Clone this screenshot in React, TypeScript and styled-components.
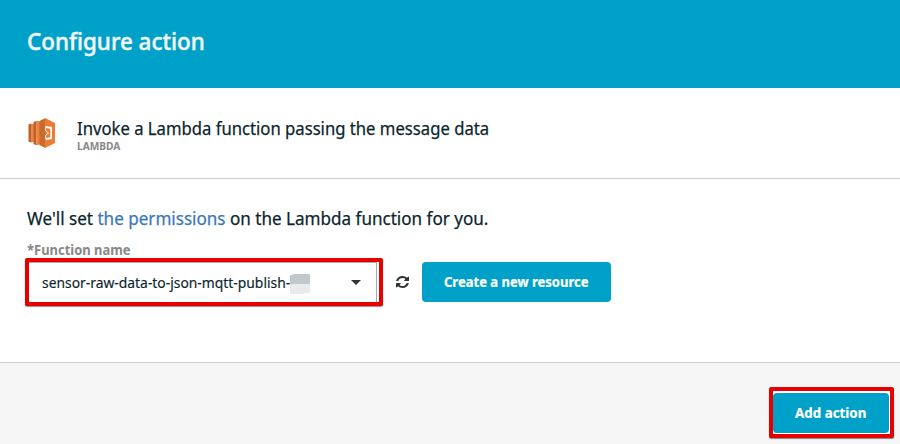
import React from 'react';
import styled, { createGlobalStyle } from 'styled-components';

const GlobalStyle = createGlobalStyle`
  * { box-sizing: border-box; }
  body {
    margin: 0;
    background: #fff;
    color: #0b252d;
    font-family: "Noto Sans", "Open Sans", sans-serif;
  }
`;

const Page = styled.div`
  display: flex;
  flex-direction: column;
  width: 900px;
  height: 444px;
  overflow: hidden;
`;

const Header = styled.header`
  flex: 0 0 88px;
  padding: 24px 27px 0;
  background: #00a1c9;
`;

/* Text set slightly narrower than the font's natural width. */
const Text = styled.span<{
  $size: number;
  $line: number;
  $scale?: number;
  $weight?: number;
  $color?: string;
  $stroke?: number;
}>`
  display: block;
  width: max-content;
  margin: 0;
  font-size: ${p => p.$size}px;
  line-height: ${p => p.$line}px;
  font-weight: ${p => p.$weight ?? 400};
  color: ${p => p.$color ?? 'inherit'};
  white-space: nowrap;
  -webkit-text-stroke: ${p => p.$stroke ?? 0}px currentColor;
  transform: scaleX(${p => p.$scale ?? 1});
  transform-origin: 0 50%;
`;

const Service = styled.section`
  display: flex;
  flex: 0 0 91px;
  gap: 21px;
  padding: 29px 28px 0;
  border-bottom: 1px solid #ccc;
`;

const LambdaLogo = styled.svg`
  display: block;
  width: 28px;
  height: 32px;
`;

const ServiceName = styled.div`
  display: flex;
  flex-direction: column;
`;

const Settings = styled.section`
  flex: 0 0 184px;
  padding: 26px 25px 0;
  border-bottom: 1px solid #ccc;
`;

const Copy = styled.div`
  height: 53px;
  padding-left: 2px;
`;

const Link = styled.a`
  color: #3b78b8;
`;

const Controls = styled.div`
  display: flex;
  align-items: flex-start;
`;

const Highlight = styled.div<{ $width: number; $height: number }>`
  width: ${p => p.$width}px;
  height: ${p => p.$height}px;
  border: 4px solid #e60000;
  border-radius: 2px;
  box-shadow: 0 1px 1px rgba(0, 0, 0, 0.45);
  background: #fff;
`;

const Select = styled.div`
  display: flex;
  align-items: center;
  width: 348px;
  height: 40px;
  padding-left: 13px;
  border: solid #aaa;
  border-width: 1px 1px 0 0;
`;

const Value = styled.div`
  width: 248px;
`;

const Redacted = styled.svg`
  width: 20px;
  height: 20px;
  margin-top: 2px;
`;

const Caret = styled.svg`
  width: 10px;
  height: 5px;
  margin-left: 41px;
`;

const Refresh = styled.svg`
  width: 13px;
  height: 12px;
  margin: 18px 13px 0 13px;
`;

const Button = styled.button<{ $width: number }>`
  display: flex;
  align-items: center;
  width: ${p => p.$width}px;
  height: 40px;
  padding: 0 0 0 22px;
  border: 0;
  border-radius: 4px;
  background: #00a1c9;
  color: #fff;
  font-family: inherit;
`;

const CreateSlot = styled.div`
  padding-top: 4px;
`;

const Footer = styled.footer`
  display: flex;
  flex: 1;
  justify-content: flex-end;
  align-items: flex-start;
  padding: 24px 6px 0 0;
  background: #f6f6f6;
`;

const ButtonInset = styled.div`
  padding-top: 2px;
`;

export default function App() {
  return (
    <Page>
      <GlobalStyle />
      <Header>
        <Text as="h1" $size={24} $line={34} $scale={0.933} $weight={500} $stroke={0.45} $color="#f2f6f8">Configure action</Text>
      </Header>
      <Service>
        <LambdaLogo viewBox="0 0 28 32">
          <path d="M.5 7.500L3 6.500v19L.5 24.500z" fill="#b9622d" />
          <path d="M3 6.500l3 .8v17.400l-3 .8z" fill="#f58536" />
          <path d="M5.500 5l3-1.200v24.400l-3-1.200z" fill="#b9622d" />
          <path d="M8.500 3.800l4.500 1v22.400l-4.500 1z" fill="#ee8136" />
          <path d="M11.500 4l6-3v30l-6-3z" fill="#c96a2f" />
          <path d="M17 1l10 5v20l-10 5z" fill="#ea7c34" />
          <path d="M17.500 9l6.500 1v12l-6.500 1v-2l4.800-.7v-8.600L17.500 11z" fill="#fff" />
          <path d="M17.500 11v2.500l3 2.500-3 2.500V21" fill="none" stroke="#fff" strokeWidth="1" />
        </LambdaLogo>
        <ServiceName>
          <Text $size={18} $line={22} $scale={0.926} $stroke={0.25}>Invoke a Lambda function passing the message data</Text>
          <Text $size={11} $line={13} $scale={0.925} $weight={700} $color="#888">LAMBDA</Text>
        </ServiceName>
      </Service>
      <Settings>
        <Copy>
          <Text $size={18} $line={27} $scale={0.948} $stroke={0.25}>We'll set <Link>the permissions</Link> on the Lambda function for you.</Text>
          <Text $size={14} $line={36} $scale={0.925} $weight={700} $color="#888">*Function name</Text>
        </Copy>
        <Controls>
          <Highlight $width={358} $height={48}>
            <Select>
              <Value><Text $size={14} $line={20} $scale={0.99} $stroke={0.15}>sensor-raw-data-to-json-mqtt-publish-</Text></Value>
              <Redacted viewBox="0 0 20 20">
                <path d="M0 1h3V0h17v10H0z" fill="#c1c8cc" />
                <path d="M0 10h20v9h-6v1H0z" fill="#e8eaeb" />
              </Redacted>
              <Caret viewBox="0 0 10 5"><path d="M0 0h10L5 5z" fill="#333" /></Caret>
            </Select>
          </Highlight>
          <Refresh viewBox="0 0 1536 1536" preserveAspectRatio="none">
            <path fill="#333" d="M1511 928q0 5-1 7-64 268-268 434.500T764 1536q-146 0-282.500-55T238 1324l-129 129q-19 19-45 19t-45-19-19-45V960q0-26 19-45t45-19h448q26 0 45 19t19 45-19 45l-137 137q71 66 161 102t187 36q134 0 250-65t186-179q11-17 53-117 8-23 30-23h192q13 0 22.500 9.500t9.500 22.500zm25-800v448q0 26-19 45t-45 19h-448q-26 0-45-19t-19-45 19-45l138-138Q969 256 768 256q-134 0-250 65T332 500q-11 17-53 117-8 23-30 23H50q-13 0-22.500-9.500T18 608v-7q65-268 270-434.500T768 0q146 0 284 55.500T1297 212l130-129q19-19 45-19t45 19 19 45z" />
          </Refresh>
          <CreateSlot>
            <Button $width={189}><Text $size={14} $line={20} $scale={0.93} $weight={700} $stroke={0.2}>Create a new resource</Text></Button>
          </CreateSlot>
        </Controls>
      </Settings>
      <Footer>
        <Highlight $width={125} $height={51}>
          <ButtonInset>
            <Button $width={116}><Text $size={14} $line={20} $scale={0.955} $weight={700} $stroke={0.2}>Add action</Text></Button>
          </ButtonInset>
        </Highlight>
      </Footer>
    </Page>
  );
}
